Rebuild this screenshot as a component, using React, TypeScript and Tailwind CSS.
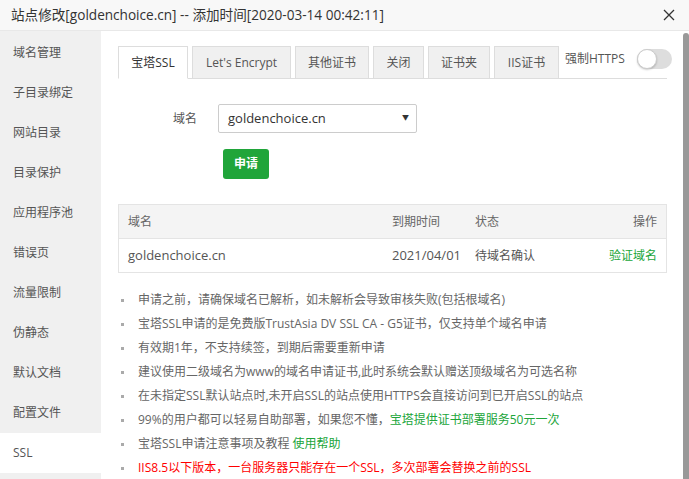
import React from "react";

const font = { fontFamily: '"Open Sans", "Noto Sans CJK SC", sans-serif' };

const sideItems = ["域名管理", "子目录绑定", "网站目录", "目录保护", "应用程序池", "错误页", "流量限制", "伪静态", "默认文档", "配置文件", "SSL"];
const tabs = ["宝塔SSL", "Let's Encrypt", "其他证书", "关闭", "证书夹", "IIS证书"];
const tabW = [70, 99, 74, 51, 62, 65];

export default function App() {
  return (
    <div className="w-[689px] h-[479px] overflow-hidden bg-white text-[#333] flex flex-col" style={font}>
      <div className="h-[31px] shrink-0 bg-[#f8f8f8] border-b border-[#e8e8e8] flex items-center justify-between pl-[11px] pr-[14px]">
        <span className="text-[13.6px] text-[#333] leading-none">站点修改[goldenchoice.cn] -- 添加时间[2020-03-14 00:42:11]</span>
        <svg width="12" height="12" viewBox="0 0 12 12" className="mb-[1px]">
          <path d="M1 1 L11 11 M11 1 L1 11" stroke="#333" strokeWidth="1.3" />
        </svg>
      </div>
      <div className="flex flex-1 min-h-0">
        <div className="w-[101px] shrink-0 bg-[#f0f0f0] flex flex-col pt-[2px]">
          {sideItems.map((s) => (
            <div key={s} className={`h-[40px] shrink-0 flex items-center pl-[13px] text-[12px] text-[#555] ${s === "SSL" ? "bg-white" : ""}`}>{s}</div>
          ))}
        </div>
        <div className="flex-1 relative pl-[17px] pr-[22px] pt-[16px]">
          <div className="absolute right-0 top-[2px] w-[6px] h-[460px] bg-[#999] rounded-t-[3px]" />
          <div className="flex items-end border-b border-[#ddd] w-[549px] h-[32px]">
            <div className="flex gap-[4px] items-end shrink-0">
              {tabs.map((t, i) => (
                <div
                  key={t}
                  style={{ width: tabW[i] }}
                  className={`h-[32px] flex items-center justify-center text-[12px] border border-[#ddd] ${i === 0 ? "bg-white border-b-white text-[#333] -mb-[1px] h-[33px]" : "bg-[#f0f0f0] text-[#555] border-b-0"}`}
                >
                  {t}
                </div>
              ))}
            </div>
            <div className="flex items-center ml-[6px] self-start pt-[2px] shrink-0 whitespace-nowrap">
              <span className="text-[12px] text-[#555]">强制HTTPS</span>
              <div className="ml-[12px] w-[35px] h-[20px] rounded-full bg-[#ddd] relative">
                <div className="absolute left-0 top-0 w-[20px] h-[20px] rounded-full bg-white border border-[#ccc] shadow-[0_1px_2px_rgba(0,0,0,0.2)]" />
              </div>
            </div>
          </div>
          <div className="flex items-center mt-[25px] h-[29px]">
            <span className="w-[80px] text-right pr-[1px] text-[12px] text-[#555]">域名</span>
            <div className="ml-[20px] w-[199px] h-[29px] border border-[#ccc] rounded-[2px] flex items-center justify-between pl-[9px] pr-[7px] text-[13px] text-[#333]">
              <span>goldenchoice.cn</span>
              <span className="text-[7px]">▼</span>
            </div>
          </div>
          <div className="ml-[105px] mt-[16px] w-[46px] h-[30px] rounded-[3px] bg-[#20a53a] text-white text-[12px] font-bold flex items-center justify-center">申请</div>
          <div className="mt-[25px] w-[549px] border border-[#e4e4e4] text-[12px]">
            <div className="h-[34px] bg-[#f4f4f4] border-b border-[#e4e4e4] flex items-center px-[9px] text-[#666]">
              <span className="w-[264px]">域名</span>
              <span className="w-[83px]">到期时间</span>
              <span className="flex-1">状态</span>
              <span>操作</span>
            </div>
            <div className="h-[33px] flex items-center px-[9px] text-[#555] text-[13px]">
              <span className="w-[264px]">goldenchoice.cn</span>
              <span className="w-[83px]">2021/04/01</span>
              <span className="flex-1 text-[12px]">待域名确认</span>
              <span className="text-[12px] text-[#20a53a]">验证域名</span>
            </div>
          </div>
          <ul className="mt-[15px] text-[12px] text-[#666] flex flex-col">
            {[
              <>申请之前，请确保域名已解析，如未解析会导致审核失败(包括根域名)</>,
              <>宝塔SSL申请的是免费版TrustAsia DV SSL CA - G5证书，仅支持单个域名申请</>,
              <>有效期1年，不支持续签，到期后需要重新申请</>,
              <>建议使用二级域名为www的域名申请证书,此时系统会默认赠送顶级域名为可选名称</>,
              <>在未指定SSL默认站点时,未开启SSL的站点使用HTTPS会直接访问到已开启SSL的站点</>,
              <>99%的用户都可以轻易自助部署，如果您不懂，<span className="text-[#20a53a]">宝塔提供证书部署服务50元一次</span></>,
              <>宝塔SSL申请注意事项及教程 <span className="text-[#20a53a]">使用帮助</span></>,
              <span className="text-[#f00]">IIS8.5以下版本，一台服务器只能存在一个SSL，多次部署会替换之前的SSL</span>,
            ].map((c, i) => (
              <li key={i} className="h-[24px] flex items-center">
                <span className="w-[3px] h-[3px] bg-[#aaa] ml-[3px] mr-[14px] shrink-0" />
                <span className="whitespace-nowrap">{c}</span>
              </li>
            ))}
          </ul>
        </div>
      </div>
    </div>
  );
}
